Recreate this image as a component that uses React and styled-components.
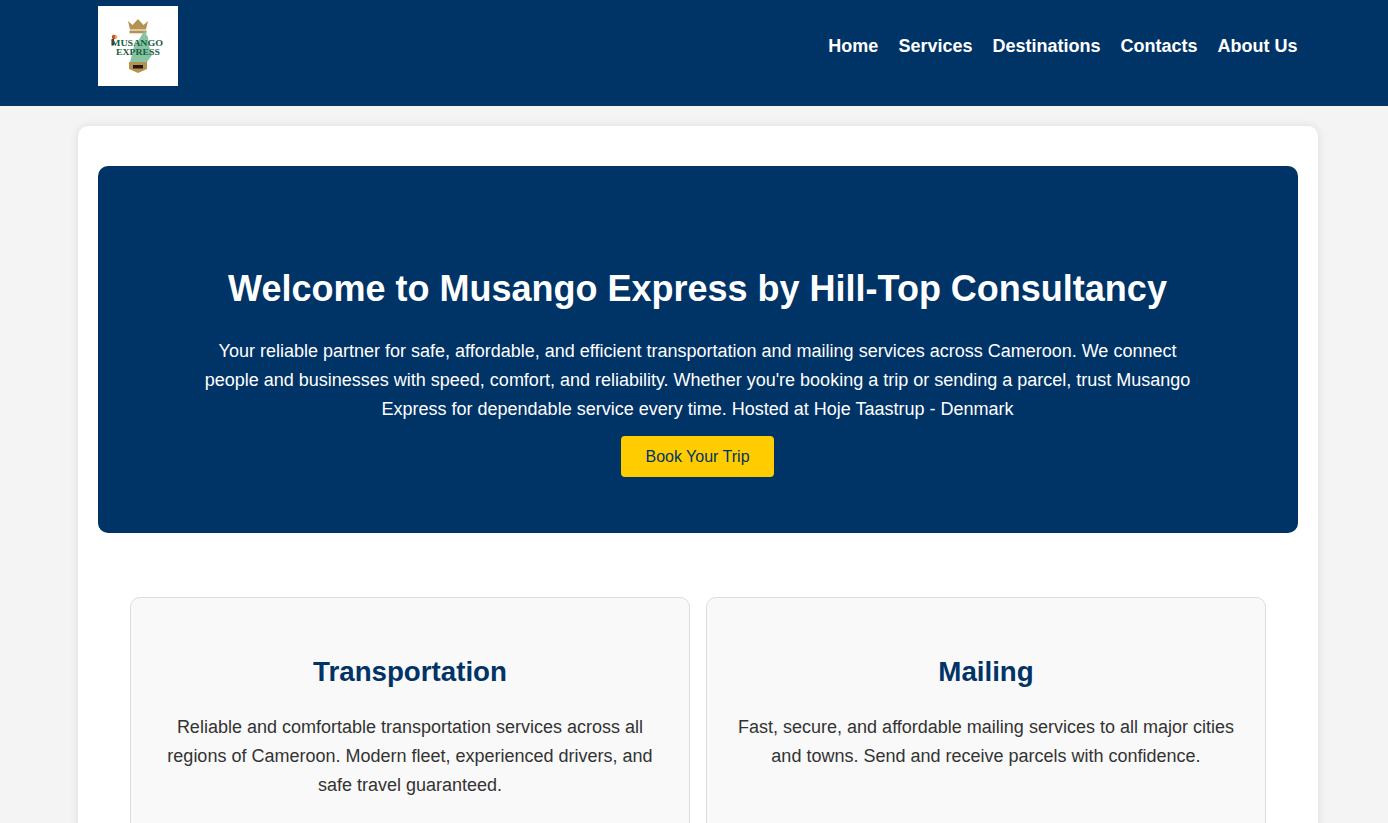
import React from "react";
import styled, { createGlobalStyle } from "styled-components";

const Global = createGlobalStyle`
  html, body { margin: 0; padding: 0; background: #f4f4f4; overflow: hidden; }
  body { font-family: "Liberation Sans", Arial, sans-serif; color: #333; line-height: 1.6; }
  #root { height: 823px; overflow: hidden; }
`;
const Header = styled.header`
  background: #003366; height: 106px; box-sizing: border-box; padding: 6px 90.5px 0 98px;
  display: flex; justify-content: space-between; align-items: flex-start;
`;
const LogoBox = styled.div`width: 80px; height: 80px; background: #fff; display: block;`;
const Nav = styled.nav`display: flex; gap: 20px; height: 80px; align-items: center;`;
const NavLink = styled.a`color: #fff; font-weight: 700; font-size: 18px; text-decoration: none;`;
const Main = styled.main`
  box-sizing: border-box; width: 1240px; margin: 20px 0 0 78px; padding: 40px 20px;
  background: #fff; border-radius: 10px; box-shadow: 0 0 10px rgba(0,0,0,0.1);
`;
const Hero = styled.section`
  background: #003366; color: #fff; border-radius: 10px; text-align: center;
  height: 367px; box-sizing: border-box; padding: 101px 20px 0 19px;
  display: flex; flex-direction: column; align-items: center;
`;
const Title = styled.h1`font-size: 36px; font-weight: 700; margin: 0 0 26px; line-height: 44px;`;
const Lead = styled.p`font-size: 18px; line-height: 29px; max-width: 1000px; margin: 0 0 12px;`;
const Cta = styled.a`
  display: block; background: #ffcc00; color: #003366; font-size: 16px; line-height: 25px;
  padding: 8px 24.5px; border-radius: 4px; text-decoration: none;
`;
const Cards = styled.section`display: flex; justify-content: center; gap: 16px; margin-top: 64px;`;
const Card = styled.article`
  box-sizing: border-box; width: 560px; height: 300px; padding: 52px 20px 0; background: #f9f9f9;
  border: 1px solid #ddd; border-radius: 10px; text-align: center;
`;
const CardTitle = styled.h2`font-size: 27.7px; color: #003366; font-weight: 700; margin: 0 0 19px; line-height: 44px;`;
const CardText = styled.p`font-size: 18px; line-height: 29px; margin: 0; color: #333;`;

const Logo = () => (
  <svg width="80" height="80" viewBox="0 0 80 80" role="img" aria-label="Musango Express logo">
    <path d="M30 15 L34.5 19 L40 13 L45.5 19 L50 15 L48 23.5 H32 Z" fill="#b3934f" />
    <rect x="31.5" y="24.5" width="17" height="2.8" fill="#b3934f" />
    <path d="M46.5 24 L48 28 L50 31 L51 40 L54 49 L49 56 H32 L34 49 L36 40 L42 32 Z" fill="#86c5a4" />
    <circle cx="16" cy="31" r="2.2" fill="#d0452f" />
    <circle cx="18" cy="31" r="1.4" fill="#e2b72d" />
    <rect x="13.5" y="33" width="2.5" height="6" fill="#5a2d2d" />
    <path d="M31 56 H49 V63 L40 67 L31 63 Z" fill="#b3934f" />
    <rect x="35" y="59" width="10" height="3.5" fill="#2a1414" />
    <text x="39" y="40" textAnchor="middle" textLength="52" lengthAdjust="spacingAndGlyphs" fontFamily="'Liberation Serif', serif" fontWeight="700" fontSize="9" fill="#1d5c3f">MUSANGO</text>
    <text x="40" y="48.5" textAnchor="middle" textLength="44" lengthAdjust="spacingAndGlyphs" fontFamily="'Liberation Serif', serif" fontWeight="700" fontSize="8" fill="#1d5c3f">EXPRESS</text>
  </svg>
);

export default function App() {
  return (
    <>
      <Global />
      <Header>
        <LogoBox><Logo /></LogoBox>
        <Nav>
          {["Home", "Services", "Destinations", "Contacts", "About Us"].map((t) => (
            <NavLink key={t} href="#">{t}</NavLink>
          ))}
        </Nav>
      </Header>
      <Main>
        <Hero>
          <Title>Welcome to Musango Express by Hill-Top Consultancy</Title>
          <Lead>Your reliable partner for safe, affordable, and efficient transportation and mailing services across Cameroon. We connect people and businesses with speed, comfort, and reliability. Whether you're booking a trip or sending a parcel, trust Musango Express for dependable service every time. Hosted at Hoje Taastrup - Denmark</Lead>
          <Cta href="#">Book Your Trip</Cta>
        </Hero>
        <Cards>
          <Card>
            <CardTitle>Transportation</CardTitle>
            <CardText>Reliable and comfortable transportation services across all regions of Cameroon. Modern fleet, experienced drivers, and safe travel guaranteed.</CardText>
          </Card>
          <Card>
            <CardTitle>Mailing</CardTitle>
            <CardText>Fast, secure, and affordable mailing services to all major cities and towns. Send and receive parcels with confidence.</CardText>
          </Card>
        </Cards>
      </Main>
    </>
  );
}
